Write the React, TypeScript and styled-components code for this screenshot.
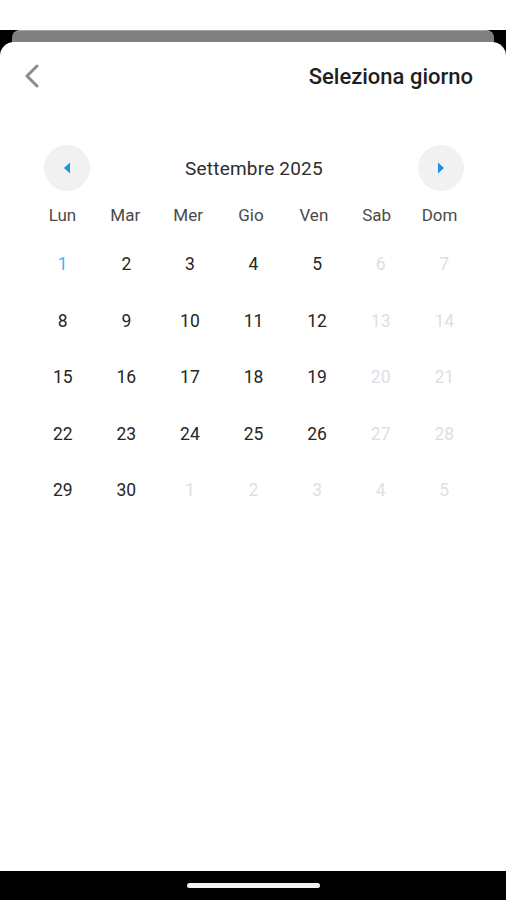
import styled, { createGlobalStyle } from 'styled-components';

const GlobalStyle = createGlobalStyle`
  html, body {
    margin: 0;
    padding: 0;
    background: #000;
  }
  body {
    font-family: Roboto, "Noto Sans", sans-serif;
    -webkit-font-smoothing: antialiased;
  }
`;

type DayCell = { label: number; muted?: boolean; today?: boolean };

const WEEKDAYS = ['Lun', 'Mar', 'Mer', 'Gio', 'Ven', 'Sab', 'Dom'];

// September 2025 starts on a Monday, weekends are disabled
const buildWeeks = (): DayCell[][] => {
    const cells: DayCell[] = [];
    for (let d = 1; d <= 30; d++) {
        const col = (d - 1) % 7;
        cells.push({ label: d, muted: col >= 5, today: d === 1 });
    }
    for (let d = 1; d <= 5; d++) {
        cells.push({ label: d, muted: true });
    }
    const weeks: DayCell[][] = [];
    for (let i = 0; i < cells.length; i += 7) {
        weeks.push(cells.slice(i, i + 7));
    }
    return weeks;
};

const App = () => {
    const weeks = buildWeeks();
    return (
        <Screen>
            <GlobalStyle />
            <StatusBar />
            <Backdrop>
                <BehindCard />
                <Sheet>
                    <Header>
                        <BackButton aria-label="Indietro">
                            <svg width="16" height="24" viewBox="0 0 16 24">
                                <path
                                    d="M13 2 L3 12 L13 22"
                                    fill="none"
                                    stroke="#8c8c8c"
                                    strokeWidth="3"
                                    strokeLinecap="round"
                                    strokeLinejoin="round"
                                />
                            </svg>
                        </BackButton>
                        <Title>Seleziona giorno</Title>
                    </Header>

                    <Calendar>
                        <MonthRow>
                            <ArrowButton aria-label="Mese precedente">
                                <svg width="8" height="12" viewBox="0 0 8 12">
                                    <path d="M7 0.5 L1 6 L7 11.5 Z" fill="#1c93e3" />
                                </svg>
                            </ArrowButton>
                            <MonthLabel>Settembre 2025</MonthLabel>
                            <ArrowButton aria-label="Mese successivo">
                                <svg width="8" height="12" viewBox="0 0 8 12">
                                    <path d="M1 0.5 L7 6 L1 11.5 Z" fill="#1c93e3" />
                                </svg>
                            </ArrowButton>
                        </MonthRow>

                        <WeekdayRow>
                            {WEEKDAYS.map(w => (
                                <Weekday key={w}>{w}</Weekday>
                            ))}
                        </WeekdayRow>

                        <DaysGrid>
                            {weeks.map((week, wi) =>
                                week.map((day, di) => (
                                    <Day
                                        key={`${wi}-${di}`}
                                        $muted={day.muted}
                                        $today={day.today}
                                    >
                                        {day.label}
                                    </Day>
                                ))
                            )}
                        </DaysGrid>
                    </Calendar>
                </Sheet>
                <NavBar>
                    <HomeIndicator />
                </NavBar>
            </Backdrop>
        </Screen>
    );
};

const Screen = styled.div`
  display: flex;
  flex-direction: column;
  height: 100vh;
  background: #fff;
`;

const StatusBar = styled.div`
  height: 30px;
  flex-shrink: 0;
  background: #fff;
`;

const Backdrop = styled.div`
  flex: 1;
  display: flex;
  flex-direction: column;
  background: #000;
  min-height: 0;
`;

const BehindCard = styled.div`
  height: 12px;
  margin: 0 12px;
  flex-shrink: 0;
  background: #808080;
  border-top: 1px solid #a6a6a6;
  border-radius: 8px 8px 0 0;
  box-sizing: border-box;
`;

const Sheet = styled.div`
  flex: 1;
  display: flex;
  flex-direction: column;
  background: #fff;
  border-radius: 14px 14px 0 0;
`;

const Header = styled.div`
  height: 68px;
  display: flex;
  align-items: center;
  justify-content: space-between;
  padding: 0 33px 0 24px;
`;

const BackButton = styled.div`
  display: flex;
  align-items: center;
  width: 16px;
  height: 24px;
`;

const Title = styled.div`
  font-size: 22px;
  font-weight: 500;
  color: #1f1f1f;
`;

const Calendar = styled.div`
  padding-top: 35px;
`;

const MonthRow = styled.div`
  display: flex;
  align-items: center;
  justify-content: space-between;
  padding: 0 42px 0 44px;
`;

const ArrowButton = styled.div`
  width: 46px;
  height: 46px;
  border-radius: 50%;
  background: #f1f1f1;
  display: flex;
  align-items: center;
  justify-content: center;
`;

const MonthLabel = styled.div`
  font-size: 19px;
  color: #2e2e2e;
  letter-spacing: 0.2px;
`;

const WeekdayRow = styled.div`
  display: grid;
  grid-template-columns: repeat(7, 1fr);
  margin-top: 12px;
  padding: 0 35px 0 31px;
  height: 24px;
  align-items: center;
`;

const Weekday = styled.div`
  text-align: center;
  font-size: 17px;
  color: #4a4a4a;
`;

const DaysGrid = styled.div`
  display: grid;
  grid-template-columns: repeat(7, 1fr);
  grid-auto-rows: 56.5px;
  margin-top: 9px;
  padding: 0 30px 0 31px;
`;

const Day = styled.div<{ $muted?: boolean; $today?: boolean }>`
  display: flex;
  align-items: center;
  justify-content: center;
  font-size: 17.5px;
  color: ${props =>
        props.$today ? '#4fb0ec' : props.$muted ? '#d9e1e8' : '#262626'};
`;

const NavBar = styled.div`
  height: 29px;
  flex-shrink: 0;
  display: flex;
  align-items: center;
  justify-content: center;
  background: #000;
`;

const HomeIndicator = styled.div`
  width: 133px;
  height: 5px;
  border-radius: 3px;
  background: #f2f2f2;
`;

export default App;
